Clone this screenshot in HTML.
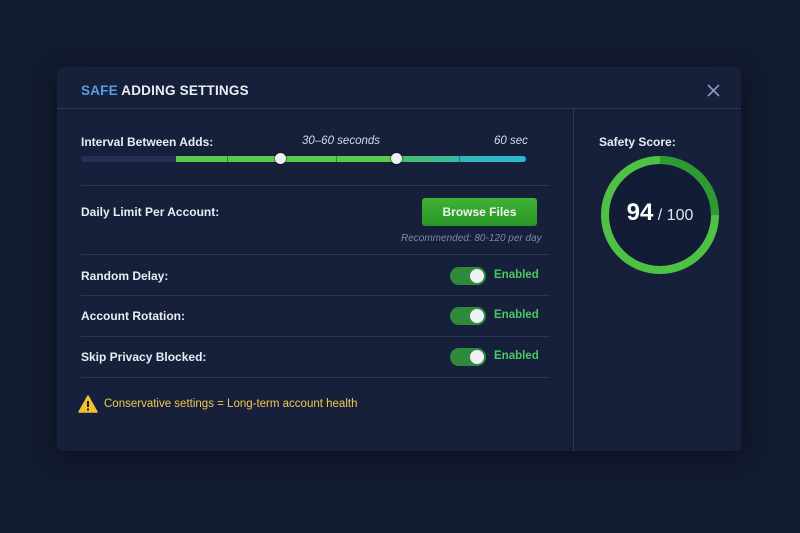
<!DOCTYPE html><html><head><style>
body{margin:0;width:800px;height:533px;background:#121a30;font-family:"Liberation Sans",sans-serif;position:relative;overflow:hidden;color:#e8ecf4}
.card{position:absolute;left:57px;top:67px;width:684px;height:384px;background:#17203b;border-radius:6px;box-shadow:0 4px 20px rgba(0,0,0,.35)}
.a{position:absolute;white-space:nowrap}
.lbl{font-size:12px;font-weight:bold;color:#e8ecf4}
.hr{position:absolute;height:1px;background:#2a3557}
.tog{position:absolute;left:450px;width:36px;height:18px;border-radius:9px;background:#2f8a3c}
.tog:after{content:"";position:absolute;right:2px;top:2px;width:14px;height:14px;border-radius:50%;background:#eef0f4}
.en{position:absolute;left:494px;font-size:11.5px;font-weight:bold;color:#4cc763}
.seg{position:absolute;top:156px;height:6px}
.h{position:absolute;top:153px;width:11px;height:11px;border-radius:50%;background:#eef0f4;box-shadow:0 0 2px #000}
</style></head><body>
<div class="card"></div>
<div class="a" style="left:81px;top:83px;font-size:13.5px;font-weight:bold;letter-spacing:.2px"><span style="color:#5a9de0">SAFE</span> ADDING SETTINGS</div>
<svg style="position:absolute;left:707px;top:84px" width="13" height="13" viewBox="0 0 13 13"><path d="M1 1L12 12M12 1L1 12" stroke="#8a9ac0" stroke-width="1.6"/></svg>
<div class="hr" style="left:57px;top:108px;width:684px"></div>
<div style="position:absolute;left:573px;top:108px;width:1px;height:343px;background:#2a3557"></div>
<div class="a lbl" style="left:81px;top:135px">Interval Between Adds:</div>
<div class="a" style="left:302px;top:135px;font-size:11.5px;font-style:italic;color:#d5dbe8">30–60 seconds</div>
<div class="a" style="left:494px;top:135px;font-size:11.5px;font-style:italic;color:#d5dbe8">60 sec</div>
<div class="seg" style="left:81px;width:95px;background:#243154;border-radius:3px 0 0 3px"></div>
<div class="seg" style="left:176px;width:221px;background:#5cc94e"></div>
<div class="seg" style="left:397px;width:62px;background:linear-gradient(90deg,#46c06a,#3ab8a0)"></div>
<div class="seg" style="left:459px;width:67px;background:linear-gradient(90deg,#33b8b8,#2ab8da);border-radius:0 3px 3px 0"></div>
<div style="position:absolute;left:227px;top:156px;width:1px;height:6px;background:#2b8a3a"></div>
<div style="position:absolute;left:336px;top:156px;width:1px;height:6px;background:#2b8a3a"></div>
<div style="position:absolute;left:459px;top:156px;width:1px;height:6px;background:#2b7a7a"></div>
<div class="h" style="left:275px"></div><div class="h" style="left:391px"></div>
<div class="hr" style="left:81px;top:185px;width:469px"></div>
<div class="a lbl" style="left:81px;top:205px">Daily Limit Per Account:</div>
<div class="a" style="left:422px;top:198px;width:115px;height:28px;background:linear-gradient(#3fb336,#2a9626);border-radius:3px;font-size:12px;font-weight:bold;text-align:center;line-height:28px;color:#f0f4f0">Browse Files</div>
<div class="a" style="left:401px;top:233px;font-size:10px;font-style:italic;color:#7e8aa8">Recommended: 80-120 per day</div>
<div class="hr" style="left:81px;top:254px;width:469px"></div>
<div class="a lbl" style="left:81px;top:269px">Random Delay:</div>
<div class="tog" style="top:267px"></div><div class="en" style="top:269px">Enabled</div>
<div class="hr" style="left:81px;top:295px;width:469px"></div>
<div class="a lbl" style="left:81px;top:309px">Account Rotation:</div>
<div class="tog" style="top:307px"></div><div class="en" style="top:309px">Enabled</div>
<div class="hr" style="left:81px;top:336px;width:469px"></div>
<div class="a lbl" style="left:81px;top:350px">Skip Privacy Blocked:</div>
<div class="tog" style="top:348px"></div><div class="en" style="top:350px">Enabled</div>
<div class="hr" style="left:81px;top:377px;width:469px"></div>
<svg style="position:absolute;left:78px;top:395px" width="20" height="18" viewBox="0 0 20 18"><path d="M10 1 L19 17 L1 17 Z" fill="#f2c12e" stroke="#f2c12e" stroke-linejoin="round" stroke-width="1.5"/><rect x="9" y="6" width="2" height="6" fill="#1a1a1a"/><rect x="9" y="13.5" width="2" height="2" fill="#1a1a1a"/></svg>
<div class="a" style="left:104px;top:398px;font-size:11.5px;color:#f2c84a">Conservative settings = Long-term account health</div>
<div class="a lbl" style="left:599px;top:135px">Safety Score:</div>
<svg style="position:absolute;left:600px;top:155px" width="120" height="120" viewBox="0 0 120 120">
<circle cx="60" cy="60" r="55" fill="#131c36"/>
<circle cx="60" cy="60" r="55" fill="none" stroke="#4fc245" stroke-width="8"/>
<path d="M60 5 A55 55 0 0 1 115 60" fill="none" stroke="#2e9a33" stroke-width="8"/>
</svg>
<div class="a" style="left:600px;top:199px;width:120px;text-align:center;color:#fff"><span style="font-size:24px;font-weight:bold">94</span><span style="font-size:16px;color:#dfe4ee"> / 100</span></div>
</body></html>
